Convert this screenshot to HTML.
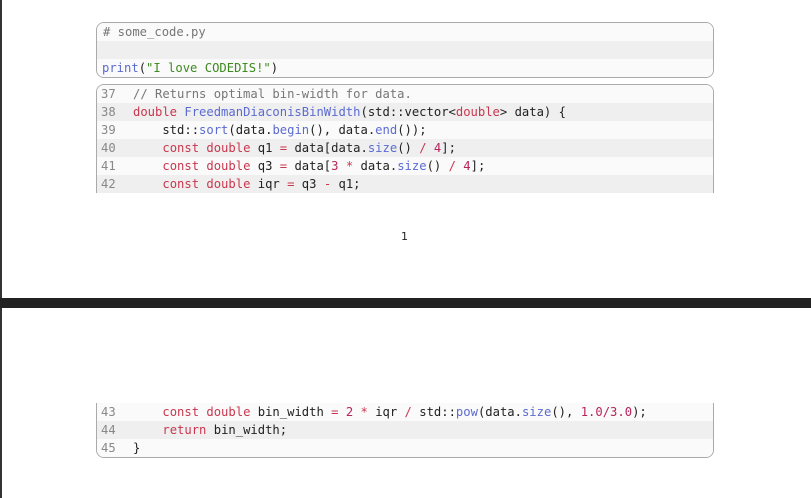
<!DOCTYPE html>
<html><head><style>
html,body{margin:0;padding:0;width:811px;height:498px;background:#fff;overflow:hidden;position:relative;font-family:"DejaVu Sans Mono","Liberation Mono",monospace;font-size:12.2px;color:#222}
.vl{position:absolute;left:0;top:0;width:2px;height:498px;background:#333}
.band{position:absolute;left:0;top:298px;width:811px;height:10px;background:#222}
.box{position:absolute;left:96px;width:616px;border:1.5px solid #aaa;overflow:hidden}
.r{height:18px;line-height:18px;white-space:pre;position:relative}
.a{background:#fafafa}.b{background:#efefef}
.n{position:absolute;left:4px;color:#888}
.c{position:absolute;left:36px}
.k{color:#c8374e}.f{color:#5b6bd0}.s{color:#3d8a1e}.m{color:#777}.num{color:#b8245a}.o{color:#c8374e}
</style></head><body>
<div class="vl"></div>
<div class="band"></div>
<div class="box" style="top:22px;height:54px;border-radius:8px">
<div class="r a"><span style="position:absolute;left:6px;color:#777"># some_code.py</span></div>
<div class="r b"></div>
<div class="r a"><span style="position:absolute;left:5px"><span class="f">print</span>(<span class="s">"I love CODEDIS!"</span>)</span></div>
</div>
<div class="box" style="top:84px;height:108px;border-radius:8px 8px 0 0;border-bottom:none">
<div class="r a"><span class="n">37</span><span class="c m">// Returns optimal bin-width for data.</span></div>
<div class="r b"><span class="n">38</span><span class="c"><span class="k">double</span> <span class="f">FreedmanDiaconisBinWidth</span>(std::vector&lt;<span class="k">double</span>&gt; data) {</span></div>
<div class="r a"><span class="n">39</span><span class="c">    std::<span class="f">sort</span>(data.<span class="f">begin</span>(), data.<span class="f">end</span>());</span></div>
<div class="r b"><span class="n">40</span><span class="c">    <span class="k">const double</span> q1 <span class="o">=</span> data[data.<span class="f">size</span>() <span class="o">/</span> <span class="num">4</span>];</span></div>
<div class="r a"><span class="n">41</span><span class="c">    <span class="k">const double</span> q3 <span class="o">=</span> data[<span class="num">3</span> <span class="o">*</span> data.<span class="f">size</span>() <span class="o">/</span> <span class="num">4</span>];</span></div>
<div class="r b"><span class="n">42</span><span class="c">    <span class="k">const double</span> iqr <span class="o">=</span> q3 <span class="o">-</span> q1;</span></div>
</div>
<div style="position:absolute;left:401px;top:230px;font-family:'DejaVu Sans',sans-serif;font-size:11px">1</div>
<div class="box" style="top:403px;height:54px;border-radius:0 0 8px 8px;border-top:none">
<div class="r a"><span class="n">43</span><span class="c">    <span class="k">const double</span> bin_width <span class="o">=</span> <span class="num">2</span> <span class="o">*</span> iqr <span class="o">/</span> std::<span class="f">pow</span>(data.<span class="f">size</span>(), <span class="num">1.0/3.0</span>);</span></div>
<div class="r b"><span class="n">44</span><span class="c">    <span class="k">return</span> bin_width;</span></div>
<div class="r a"><span class="n">45</span><span class="c">}</span></div>
</div>
</body></html>
